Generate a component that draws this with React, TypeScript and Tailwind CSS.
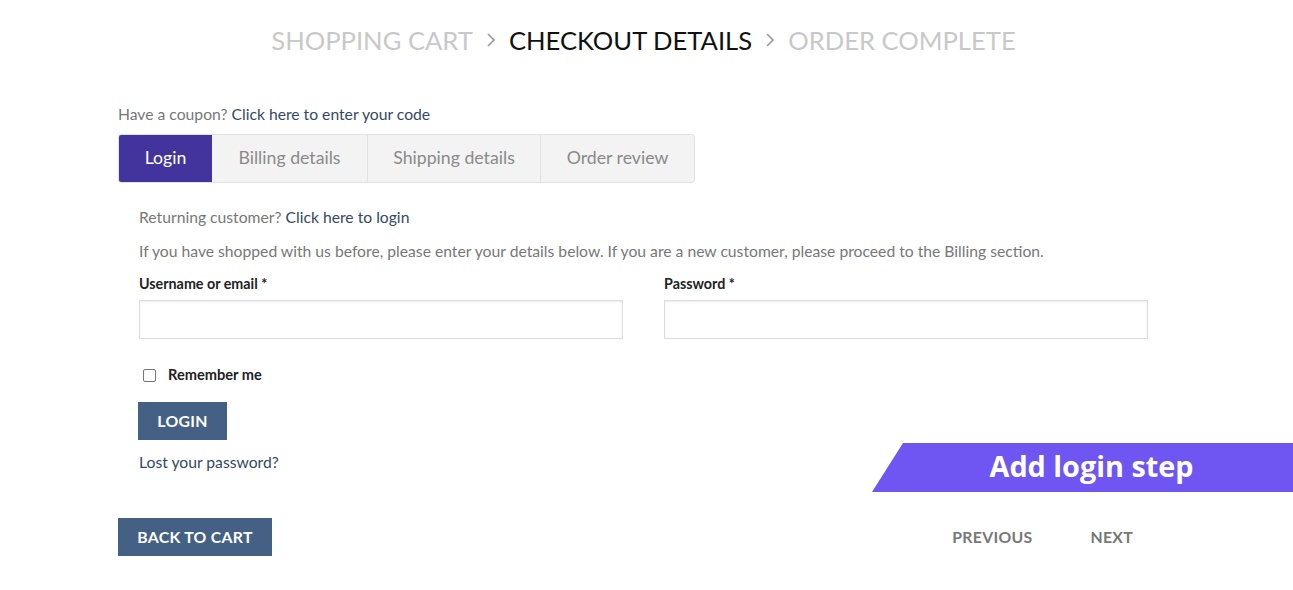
import React from "react";

function Chevron() {
  return (
    <svg width="12" height="18" viewBox="0 0 12 18" className="mx-[12px]">
      <path d="M3 3 L9 9 L3 15" fill="none" stroke="#999" strokeWidth="1.6" />
    </svg>
  );
}

export default function App() {
  return (
    <div className="relative w-[1293px] h-[590px] bg-white overflow-hidden font-['Lato',sans-serif]">
      {/* Header steps */}
      <div className="flex items-center justify-center pt-[24px] pr-[6px] text-[25.6px] leading-[32px] uppercase">
        <span className="text-[#c8c8c8]">Shopping Cart</span>
        <Chevron />
        <span className="text-[#111]">Checkout Details</span>
        <Chevron />
        <span className="text-[#c8c8c8]">Order Complete</span>
      </div>

      <div className="ml-[118px] w-[1057px] mt-[48px]">
        <div className="text-[15.7px] leading-[20px] text-[#777]">
          Have a coupon? <span className="text-[#334862]">Click here to enter your code</span>
        </div>

        {/* Tabs */}
        <div className="mt-[10px] flex w-[577px] h-[49px] rounded-[3px] border border-[#e2e2e2] bg-[#f3f3f3] overflow-hidden text-[17.7px] text-[#8a8a8a]">
          <div className="w-[93px] flex items-center justify-center bg-[#42349c] text-white">Login</div>
          <div className="w-[156px] flex items-center justify-center border-r border-[#e2e2e2]">Billing details</div>
          <div className="w-[173px] flex items-center justify-center border-r border-[#e2e2e2]">Shipping details</div>
          <div className="flex-1 flex items-center justify-center">Order review</div>
        </div>

        {/* Login content */}
        <div className="pl-[21px] pt-[24px]">
          <div className="text-[15.7px] leading-[20px] text-[#777]">
            Returning customer? <span className="text-[#334862]">Click here to login</span>
          </div>
          <div className="mt-[14px] text-[15.7px] leading-[20px] text-[#777] whitespace-nowrap">
            If you have shopped with us before, please enter your details below. If you are a new customer, please proceed to the Billing section.
          </div>
          <div className="mt-[15px] flex gap-[41px]">
            <div className="w-[484px]">
              <div className="text-[14.3px] leading-[16px] font-bold text-[#222]">Username or email *</div>
              <div className="mt-[8px] h-[39px] border border-[#ddd] shadow-[inset_0_1px_2px_rgba(0,0,0,0.08)]" />
            </div>
            <div className="w-[484px]">
              <div className="text-[14.3px] leading-[16px] font-bold text-[#222]">Password *</div>
              <div className="mt-[8px] h-[39px] border border-[#ddd] shadow-[inset_0_1px_2px_rgba(0,0,0,0.08)]" />
            </div>
          </div>
          <div className="mt-[26px] flex items-center h-[20px]">
            <div className="ml-[4px] w-[13px] h-[13px] border border-[#767676] rounded-[2px] bg-white" />
            <span className="ml-[12px] text-[14.6px] font-bold text-[#222]">Remember me</span>
          </div>
          <div className="mt-[17px] ml-[-1px] w-[89px] h-[38px] bg-[#446084] text-white text-[15.8px] font-bold uppercase flex items-center justify-center tracking-[0.3px]">
            Login
          </div>
          <div className="mt-[12px] text-[15.7px] leading-[20px] text-[#334862]">Lost your password?</div>
        </div>

        {/* Bottom buttons */}
        <div className="mt-[46px] flex items-center">
          <div className="w-[154px] h-[38px] bg-[#446084] text-white text-[15.8px] font-bold uppercase flex items-center justify-center tracking-[0.3px]">
            Back to cart
          </div>
          <div className="ml-auto mr-[42px] flex items-center gap-[58px] text-[15.8px] font-bold uppercase text-[#777] tracking-[0.3px]">
            <span>Previous</span>
            <span>Next</span>
          </div>
        </div>
      </div>

      {/* Overlay banner */}
      <div className="absolute left-[872px] top-[443px] w-[421px] h-[49px] bg-[#6f55f2] [clip-path:polygon(31px_0,100%_0,100%_100%,0_100%)] flex items-center justify-center pl-[18px] pb-[2px]">
        <span className="text-white text-[28.8px] font-bold font-['Open_Sans',sans-serif] leading-none">Add login step</span>
      </div>
    </div>
  );
}
